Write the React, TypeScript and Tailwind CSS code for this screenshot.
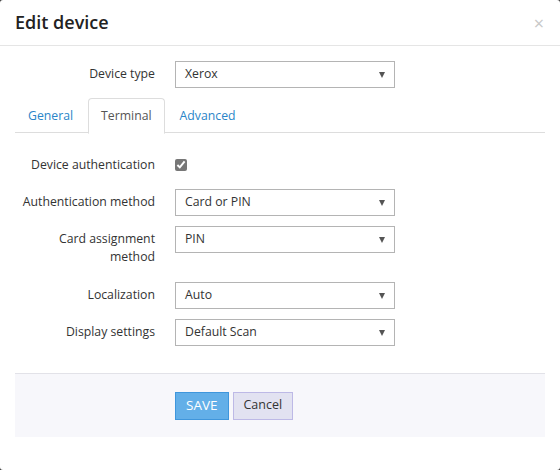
import React from 'react';

const font = { fontFamily: '"Open Sans", "Noto Sans", sans-serif' };

function Select({ value }: { value: string }) {
  return (
    <div className="relative w-[220px] h-[27px] border border-[#b4b4b4] bg-white flex items-center pl-[9px] text-[12.25px] text-[#333]">
      {value}
      <span className="absolute right-[9px] top-[10px] w-0 h-0 border-l-[3.5px] border-r-[3.5px] border-t-[6px] border-l-transparent border-r-transparent border-t-[#555]" />
    </div>
  );
}

function Row({ label, children, className = '' }: { label: React.ReactNode; children: React.ReactNode; className?: string }) {
  return (
    <div className={`flex items-start mb-[10px] ${className}`}>
      <label className="w-[140px] shrink-0 text-right pt-[4px] leading-[18px] text-[12.25px] text-[#333] whitespace-nowrap">{label}</label>
      <div className="ml-[20px]">{children}</div>
    </div>
  );
}

export default function App() {
  const tabs = ['General', 'Terminal', 'Advanced'];

  return (
    <div className="w-[560px] h-[470px] bg-[#3a3a3a]" style={font}>
      <div className="w-full h-full bg-white rounded-[3px] flex flex-col">
        {/* Header */}
        <div className="h-[46px] border-b border-[#e5e5e5] flex items-center justify-between pl-[15px] pr-[16px]">
          <h2 className="text-[18px] font-semibold text-[#222] leading-none -mt-[1px]">Edit device</h2>
          <span className="text-[#c8c8c8] text-[18px] leading-none">×</span>
        </div>

        {/* Body */}
        <div className="px-[15px] pt-[15px] flex flex-col">
          <Row label="Device type">
            <Select value="Xerox" />
          </Row>

          <div className="flex border-b border-[#dddddd] h-[35px]">
            {tabs.map((t) => {
              const active = t === 'Terminal';
              return (
                <div
                  key={t}
                  className={`px-[12px] mr-[2px] h-[36px] flex items-center text-[12.25px] rounded-t-[4px] ${
                    active
                      ? 'border border-[#dddddd] border-b-white bg-white text-[#555]'
                      : 'border border-transparent text-[#2a85c8]'
                  }`}
                >
                  {t}
                </div>
              );
            })}
          </div>

          <div className="pt-[19px] flex flex-col">
            <Row label="Device authentication">
              <div className="h-[27px] flex items-center">
                <input type="checkbox" defaultChecked className="w-[12px] h-[12px] -mt-[2px] accent-[#777]" />
              </div>
            </Row>
            <Row label="Authentication method">
              <Select value="Card or PIN" />
            </Row>
            <Row label={<>Card assignment<br />method</>} className="mb-[16px]">
              <Select value="PIN" />
            </Row>
            <Row label="Localization">
              <Select value="Auto" />
            </Row>
            <Row label="Display settings">
              <Select value="Default Scan" />
            </Row>
          </div>

          {/* Footer */}
          <div className="mt-[17px] border-t border-[#e2e2e8] bg-[#f7f7fb] h-[64px] flex items-center pl-[160px] gap-[4px]">
            <button className="h-[28px] px-[10px] bg-[#63afe8] border border-[#3f96dc] text-white text-[13.5px] leading-none">
              SAVE
            </button>
            <button className="h-[28px] px-[10px] bg-[#e2e2f1] border border-[#bdb9e6] text-[#333] text-[12.5px] leading-none">
              Cancel
            </button>
          </div>
        </div>
      </div>
    </div>
  );
}
